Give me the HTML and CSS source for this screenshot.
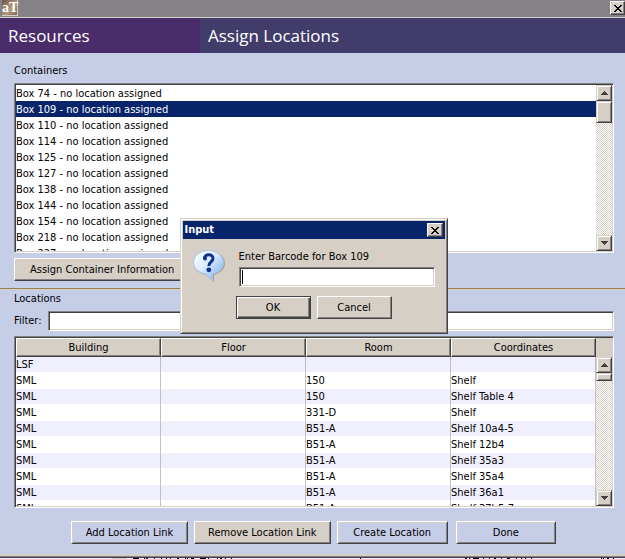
FILE: index.html
```html
<!DOCTYPE html>
<html lang="en">
<head>
  <meta charset="UTF-8">
  <title>Assign Locations</title>
  <link rel="stylesheet" href="styles.css">
</head>
<body>

<!-- Window title bar -->
<div class="titlebar">
  <span class="app-icon">aT</span>
  <button class="close-btn" type="button" aria-label="Close window">
    <svg viewBox="0 0 8 7" width="8" height="7" shape-rendering="crispEdges"><path d="M0 0h2v1h1v1h2v-1h1v-1h2v1h-1v1h-1v1h-1v1h1v1h1v1h1v1h-2v-1h-1v-1h-2v1h-1v1h-2v-1h1v-1h1v-1h1v-1h-1v-1h-1v-1h-1z"/></svg>
  </button>
</div>

<header class="banner">
  <h1 class="banner-module">Resources</h1>
  <h2 class="banner-title">Assign Locations</h2>
</header>

<main class="content">
  <!-- Containers -->
  <section class="panel containers">
    <h3 class="label" id="containersLabel">Containers</h3>
    <div class="sunken list-box">
      <ul class="list" role="listbox" aria-labelledby="containersLabel">
        <li role="option">Box 74 - no location assigned</li>
        <li role="option" class="selected" aria-selected="true">Box 109 - no location assigned</li>
        <li role="option">Box 110 - no location assigned</li>
        <li role="option">Box 114 - no location assigned</li>
        <li role="option">Box 125 - no location assigned</li>
        <li role="option">Box 127 - no location assigned</li>
        <li role="option">Box 138 - no location assigned</li>
        <li role="option">Box 144 - no location assigned</li>
        <li role="option">Box 154 - no location assigned</li>
        <li role="option">Box 218 - no location assigned</li>
        <li role="option">Box 227 - no location assigned</li>
      </ul>
      <div class="scrollbar">
        <button class="scroll-btn" type="button" aria-label="Scroll up"><svg viewBox="0 0 7 4" width="7" height="4" shape-rendering="crispEdges"><path d="M3 0h1v1h1v1h1v1h1v1h-7v-1h1v-1h1v-1h1z"/></svg></button>
        <div class="thumb thumb-list"></div>
        <div class="track"></div>
        <button class="scroll-btn" type="button" aria-label="Scroll down"><svg viewBox="0 0 7 4" width="7" height="4" shape-rendering="crispEdges"><path d="M0 0h7v1h-1v1h-1v1h-1v1h-1v-1h-1v-1h-1v-1h-1z"/></svg></button>
      </div>
    </div>
    <button class="btn btn-assign" type="button">Assign Container Information</button>
  </section>

  <hr class="divider">

  <!-- Locations -->
  <section class="panel locations">
    <h3 class="label">Locations</h3>
    <div class="filter">
      <label for="filter">Filter:</label>
      <input class="sunken" type="text" id="filter">
    </div>
    <div class="sunken table-box">
      <div class="table-view">
        <table>
          <thead>
            <tr><th>Building</th><th>Floor</th><th>Room</th><th>Coordinates</th></tr>
          </thead>
          <tbody>
            <tr><td>LSF</td><td></td><td></td><td></td></tr>
            <tr><td>SML</td><td></td><td>150</td><td>Shelf</td></tr>
            <tr><td>SML</td><td></td><td>150</td><td>Shelf Table 4</td></tr>
            <tr><td>SML</td><td></td><td>331-D</td><td>Shelf</td></tr>
            <tr><td>SML</td><td></td><td>B51-A</td><td>Shelf 10a4-5</td></tr>
            <tr><td>SML</td><td></td><td>B51-A</td><td>Shelf 12b4</td></tr>
            <tr><td>SML</td><td></td><td>B51-A</td><td>Shelf 35a3</td></tr>
            <tr><td>SML</td><td></td><td>B51-A</td><td>Shelf 35a4</td></tr>
            <tr><td>SML</td><td></td><td>B51-A</td><td>Shelf 36a1</td></tr>
            <tr><td>SML</td><td></td><td>B51-A</td><td>Shelf 37b5-7</td></tr>
          </tbody>
        </table>
      </div>
      <div class="scrollbar">
        <div class="corner"></div>
        <button class="scroll-btn" type="button" aria-label="Scroll up"><svg viewBox="0 0 7 4" width="7" height="4" shape-rendering="crispEdges"><path d="M3 0h1v1h1v1h1v1h1v1h-7v-1h1v-1h1v-1h1z"/></svg></button>
        <div class="thumb thumb-table"></div>
        <div class="track"></div>
        <button class="scroll-btn" type="button" aria-label="Scroll down"><svg viewBox="0 0 7 4" width="7" height="4" shape-rendering="crispEdges"><path d="M0 0h7v1h-1v1h-1v1h-1v1h-1v-1h-1v-1h-1v-1h-1z"/></svg></button>
      </div>
    </div>
  </section>

  <div class="actions">
    <button class="btn btn-blue btn-add" type="button">Add Location Link</button>
    <button class="btn btn-remove" type="button">Remove Location Link</button>
    <button class="btn btn-blue btn-create" type="button">Create Location</button>
    <button class="btn btn-blue btn-done" type="button">Done</button>
  </div>
</main>

<!-- Window frame and the sliver of the window behind it -->
<div class="window-edge"></div>
<div class="behind">
  <svg viewBox="0 0 625 1" width="625" height="1" shape-rendering="crispEdges" aria-hidden="true">
    <path d="M112 0h14v1h-14z" fill="#d6cfc6"/>
    <path d="M133 0h6v1h-6zM144 0h1v1h-1zM146 0h2v1h-2zM154 0h1v1h-1zM161 0h1v1h-1zM166 0h1v1h-1zM170 0h1v1h-1zM177 0h2v1h-2zM185 0h1v1h-1zM187 0h1v1h-1zM191 0h3v1h-3zM200 0h6v1h-6zM208 0h1v1h-1zM217 0h1v1h-1zM220 0h2v1h-2zM225 0h1v1h-1zM231 0h1v1h-1zM360 0h1v1h-1zM465 0h2v1h-2zM469 0h1v1h-1zM473 0h6v1h-6zM483 0h1v1h-1zM489 0h1v1h-1zM494 0h2v1h-2zM501 0h1v1h-1zM507 0h3v1h-3zM516 0h1v1h-1zM521 0h1v1h-1zM525 0h1v1h-1zM531 0h1v1h-1zM601 0h1v1h-1zM603 0h1v1h-1zM607 0h2v1h-2zM613 0h1v1h-1z"/>
  </svg>
</div>

<!-- Barcode dialog -->
<div class="dialog" role="dialog" aria-labelledby="dialogTitle">
  <div class="dialog-title">
    <span id="dialogTitle">Input</span>
    <button class="close-btn" type="button" aria-label="Close dialog">
      <svg viewBox="0 0 8 7" width="8" height="7" shape-rendering="crispEdges"><path d="M0 0h2v1h1v1h2v-1h1v-1h2v1h-1v1h-1v1h-1v1h1v1h1v1h1v1h-2v-1h-1v-1h-2v1h-1v1h-2v-1h1v-1h1v-1h1v-1h-1v-1h-1v-1h-1z"/></svg>
    </button>
  </div>
  <form class="dialog-body">
    <div class="dialog-row">
      <svg class="question" viewBox="0 0 32 32" width="32" height="32">
        <defs>
          <linearGradient id="bubble" x1="0" y1="0" x2="1" y2="1">
            <stop offset="0" stop-color="#ffffff"/>
            <stop offset="0.45" stop-color="#d9ebff"/>
            <stop offset="1" stop-color="#6aa5ea"/>
          </linearGradient>
        </defs>
        <path d="M17 1C25 1 32 6 32 13.500C32 19 27 23.500 21 25V32L13 25C6 24 1 19 1 13.500C1 6 8 1 17 1Z" fill="#8f8d89" opacity="0.7"/>
        <path d="M15.500 0.500C24 0.500 30.500 6 30.500 12.500C30.500 18 26 23 19.500 24V31L12.500 24C5.500 23 0.500 18 0.500 12.500C0.500 6 7 0.500 15.500 0.500Z" fill="url(#bubble)" stroke="#a9c3e4"/>
        <path d="M11.500 8.500C11.500 3.500 20 3.500 20 8.500C20 12 15.800 12 15.800 16" fill="none" stroke="#0b318f" stroke-width="3"/>
        <circle cx="12" cy="8.500" r="2" fill="#0b318f"/>
        <circle cx="15.800" cy="19.800" r="2.400" fill="#0b318f"/>
      </svg>
      <div class="dialog-field">
        <label for="barcode">Enter Barcode for Box 109</label>
        <div class="sunken barcode-box">
          <span class="caret"></span>
          <input type="text" id="barcode">
        </div>
      </div>
    </div>
    <div class="dialog-buttons">
      <button class="btn btn-default" type="button">OK</button>
      <button class="btn" type="button">Cancel</button>
    </div>
  </form>
</div>

</body>
</html>
```

FILE: styles.css
```css
* {
  box-sizing: border-box;
}

body {
  margin: 0;
  height: 100vh;
  display: flex;
  flex-direction: column;
  overflow: hidden;
  position: relative;
  background-color: #c6cde7;
  color: #000;
  font-family: "DejaVu Sans Condensed", "Noto Sans", sans-serif;
  font-size: 11px;
  line-height: 14px;
}

button,
input {
  font: inherit;
  color: inherit;
  border-radius: 0;
  padding: 0;
}

h1, h2, h3 {
  margin: 0;
  font-size: 11px;
  font-weight: normal;
}

svg {
  display: block;
}

/* Title bar */
.titlebar {
  display: flex;
  justify-content: space-between;
  align-items: flex-start;
  flex: none;
  height: 18px;
  padding-left: 2px;
  background-color: #848284;
  border-bottom: 1px solid #d6d3ce;
}

.app-icon {
  width: 16px;
  height: 16px;
  background: linear-gradient(135deg, #6b5544, #b39a80 60%, #7b6654);
  border-right: 1px solid #d6cfc6;
  border-bottom: 1px solid #d6cfc6;
  color: #fff;
  font-family: "Liberation Serif", serif;
  font-size: 14px;
  font-weight: bold;
  line-height: 15px;
  text-align: center;
}

.close-btn {
  display: flex;
  align-items: center;
  justify-content: center;
  width: 16px;
  height: 14px;
  background-color: #d6cfc6;
  border: 1px solid;
  border-color: #fff #424142 #424142 #fff;
  box-shadow: inset -1px -1px #848284;
}

.titlebar .close-btn {
  margin-top: 1px;
  width: 15px;
}

/* Header */
.banner {
  display: flex;
  flex: none;
  height: 35px;
  color: #fff;
  font-family: "Open Sans", "Noto Sans", sans-serif;
}

.banner h1,
.banner h2 {
  padding-left: 8px;
  font-size: 17px;
  font-weight: 500;
  line-height: 36px;
}

.banner-module {
  width: 32%;
  background-color: #4a2c6b;
}

.banner-title {
  flex: 1;
  background-color: #423c6b;
}

/* Panels */
.content {
  flex: 1;
  min-height: 0;
  display: flex;
  flex-direction: column;
}

.panel {
  display: flex;
  flex-direction: column;
  gap: 5px;
  min-height: 0;
  padding: 0 11px 0 14px;
}

.containers {
  flex: 1 1 235px;
  padding-top: 11px;
  padding-bottom: 7px;
}

.locations {
  flex: 1 1 218px;
  padding-top: 2px;
}

.sunken {
  background-color: #fff;
  border: 1px solid;
  border-color: #848284 #fff #fff #848284;
  box-shadow: inset 1px 1px #424142, inset -1px -1px #d6cfc6;
}

.list-box,
.table-box {
  flex: 1;
  min-height: 0;
  display: flex;
  padding: 1px;
}

.list {
  flex: 1;
  margin: 0;
  padding: 0;
  overflow: hidden;
  list-style: none;
}

.list li {
  height: 16px;
  line-height: 17px;
}

.list .selected {
  background-color: #08246b;
  color: #fff;
}

/* Scrollbars */
.scrollbar {
  display: flex;
  flex-direction: column;
  flex: none;
  width: 16px;
}

.scroll-btn,
.thumb {
  flex: none;
  display: flex;
  align-items: center;
  justify-content: center;
  height: 16px;
  background-color: #d6cfc6;
  border: 1px solid;
  border-color: #d6cfc6 #424142 #424142 #d6cfc6;
  box-shadow: inset 1px 1px #fff, inset -1px -1px #848284;
}

.scroll-btn svg {
  fill: #424142;
}

.thumb-list {
  height: 22px;
}

.thumb-table {
  height: 8px;
}

.track {
  flex: 1;
  background: repeating-conic-gradient(#d6cfc6 0% 25%, #fff 0% 50%) 0 0 / 2px 2px;
}

.corner {
  flex: none;
  height: 19px;
  background-color: #d6cfc6;
}

/* Buttons */
.btn {
  height: 23px;
  background-color: #d6cfc6;
  border: 1px solid;
  border-color: #fff #424142 #424142 #fff;
  box-shadow: inset -1px -1px #848284;
  text-align: center;
}

.btn-assign {
  flex: none;
  align-self: flex-start;
  padding: 0 15px;
}

.btn-blue {
  background-color: #c6cde7;
  box-shadow: inset 1px 1px #d6cfc6, inset -1px -1px #848284;
}

.divider {
  flex: none;
  width: 100%;
  height: 2px;
  margin: 0;
  border: 0;
  border-top: 1px solid #94824a;
  background-color: #d6cfc6;
}

/* Filter */
.filter {
  display: flex;
  align-items: center;
  gap: 6px;
}

.filter input {
  flex: 1;
  height: 20px;
  padding: 0 3px;
}

/* Table */
.table-view {
  flex: 1;
  overflow: hidden;
}

table {
  width: 100%;
  table-layout: fixed;
  border-collapse: separate;
  border-spacing: 0;
}

th {
  height: 19px;
  padding: 0;
  background-color: #d6cfc6;
  border: 1px solid;
  border-color: #fff #424142 #424142 #fff;
  box-shadow: inset -1px -1px #848284;
  font-weight: normal;
}

td {
  height: 16px;
  padding: 0;
  border-right: 1px solid #bdbebd;
  border-bottom: 1px solid #fff;
  white-space: nowrap;
}

tbody tr:nth-child(odd) {
  background-color: #efeffe;
}

/* Bottom buttons */
.actions {
  display: flex;
  flex: none;
  gap: 6px;
  padding: 13px 69px 10px 71px;
}

.btn-add {
  flex: 117;
}

.btn-remove {
  flex: 137;
}

.btn-create {
  flex: 111;
}

.btn-done {
  flex: 100;
  margin-left: 2px;
}

.window-edge {
  flex: none;
  height: 4px;
  background-color: #848284;
  border-top: 2px solid #d6cfc6;
  border-bottom: 1px solid #424142;
}

.behind {
  flex: none;
  height: 1px;
  overflow: hidden;
  background-color: #efeffe;
}

/* Dialog */
.dialog {
  position: absolute;
  top: 218px;
  left: calc(50% - 133px);
  width: 268px;
  height: 116px;
  padding: 2px;
  background-color: #d6cfc6;
  border: 1px solid;
  border-color: #d6cfc6 #424142 #424142 #d6cfc6;
  box-shadow: inset 1px 1px #fff, inset -1px -1px #848284;
}

.dialog-title {
  display: flex;
  align-items: center;
  justify-content: space-between;
  height: 18px;
  padding: 0 2px;
  background-color: #08246b;
  color: #fff;
  font-weight: bold;
}

.dialog-body {
  padding: 11px 10px;
}

.dialog-row {
  display: flex;
  gap: 14px;
}

.dialog-field {
  flex: 1;
}

.dialog-field label {
  display: block;
  height: 17px;
}

.barcode-box {
  display: flex;
  align-items: center;
  height: 20px;
  padding: 1px 2px;
}

.caret {
  width: 1px;
  height: 14px;
  background-color: #000;
}

.barcode-box input {
  flex: 1;
  min-width: 0;
  border: 0;
  background: none;
  outline: none;
}

.dialog-buttons {
  display: flex;
  justify-content: center;
  gap: 6px;
  padding-top: 9px;
}

.dialog-buttons .btn {
  width: 75px;
}

.dialog-buttons .btn-default {
  border-color: #424142;
  box-shadow: inset 1px 1px #fff, inset -1px -1px #424142, inset -2px -2px #848284;
}
```
